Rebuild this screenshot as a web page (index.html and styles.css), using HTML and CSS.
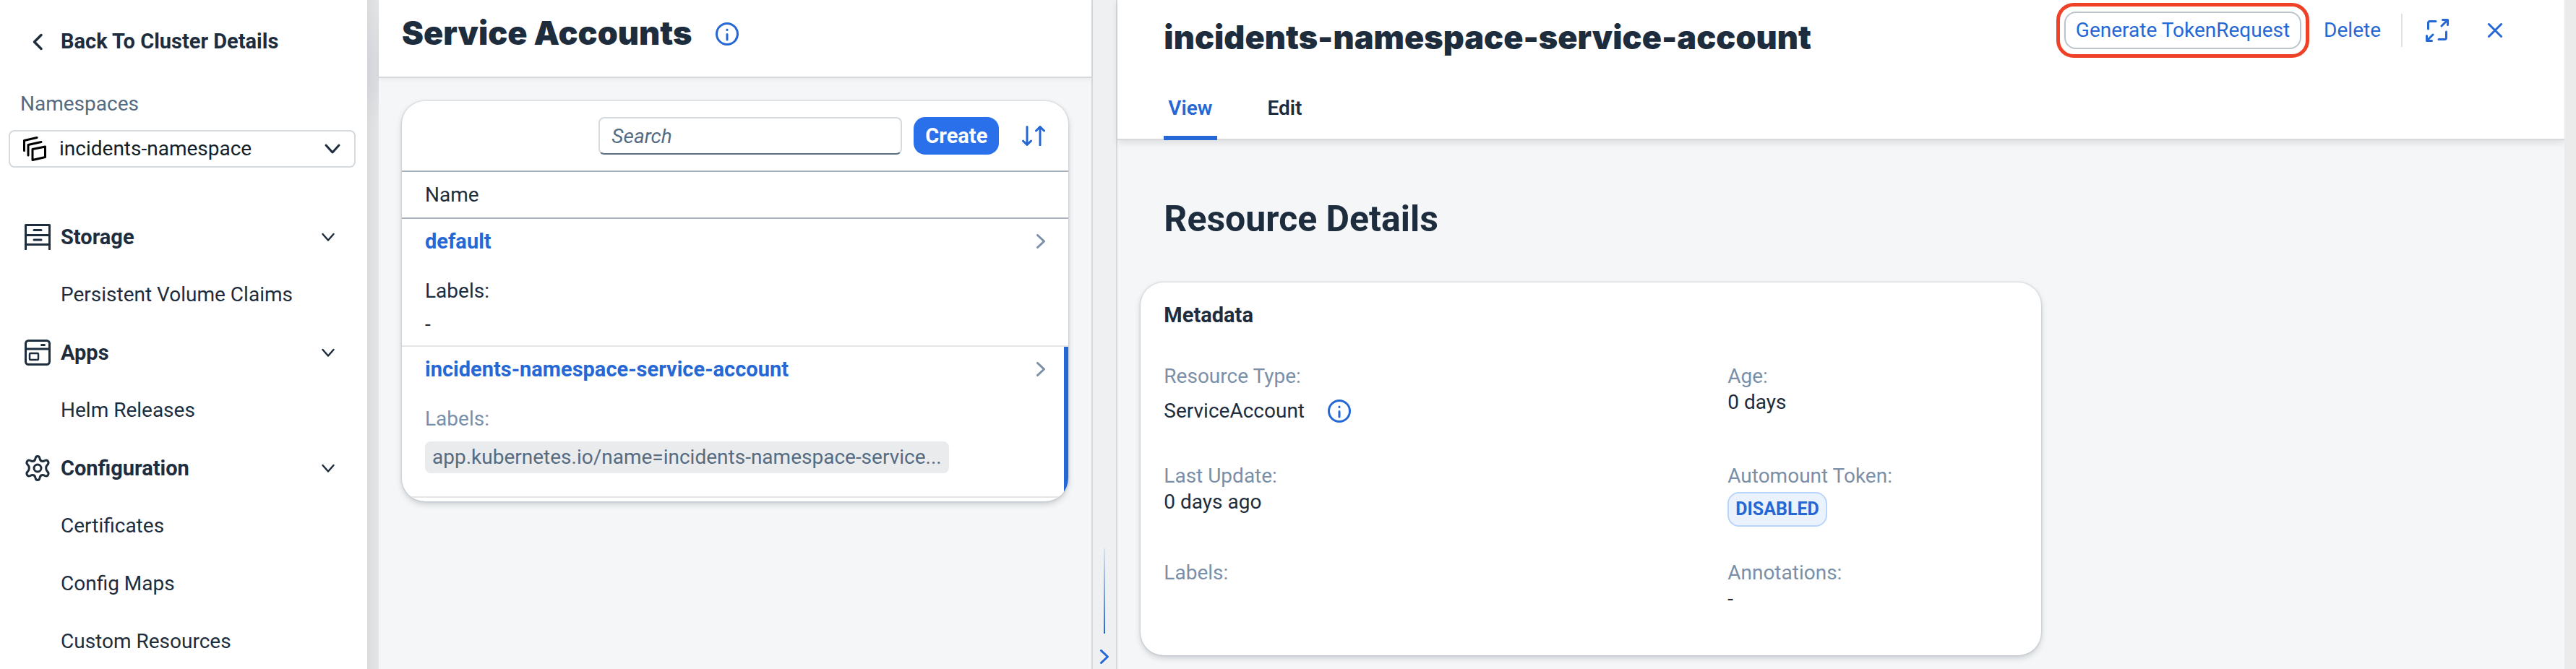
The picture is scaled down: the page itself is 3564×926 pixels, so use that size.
FILE: index.html
```html
<!DOCTYPE html>
<html lang="en">
<head>
<meta charset="utf-8">
<title>Service Accounts</title>
<link rel="stylesheet" href="styles.css">
</head>
<body>
<div class="app">
  <nav class="sidebar" aria-label="Namespace navigation">
    <a class="back" href="#">
      <svg class="icon" viewBox="0 0 36 36"><path d="M23 9.500 13.500 19l9.500 9.500" stroke-width="3.500"/></svg>
      <span>Back To Cluster Details</span>
    </a>
    <label class="ns-label" for="namespace">Namespaces</label>
    <div class="ns-select">
      <svg class="ns-icon" viewBox="0 0 32 34"><path d="M1.500 19.500V5.500L19 1.500M7 26V11.500L25 7.500M13 17.500 30.500 14v14.500L13 32.500z"/></svg>
      <select id="namespace"><option>incidents-namespace</option></select>
      <svg class="ns-chevron" viewBox="0 0 24 24"><path d="m3 7 9 10 9-10"/></svg>
    </div>
    <ul class="menu">
      <li><button class="group" type="button">
        <svg class="icon" viewBox="0 0 36 36"><path d="M1.500 35V1.500h33V35M1.500 15.500h33M1.500 28.500h33M13 8.500h10M13 22h10"/></svg>
        <span class="group-name">Storage</span>
        <svg class="chevron" viewBox="0 0 20 20"><path d="m2.500 6 7.500 8.500L17.500 6"/></svg></button></li>
      <li><a class="item" href="#">Persistent Volume Claims</a></li>
      <li><button class="group" type="button">
        <svg class="icon" viewBox="0 0 36 36"><rect x="1.500" y="1.500" width="33" height="33" rx="4"/><path d="M1.500 13h33M23.500 7.500h4"/><rect x="7" y="19" width="12" height="9" rx="1" stroke-width="2.500"/></svg>
        <span class="group-name">Apps</span>
        <svg class="chevron" viewBox="0 0 20 20"><path d="m2.500 6 7.500 8.500L17.500 6"/></svg></button></li>
      <li><a class="item" href="#">Helm Releases</a></li>
      <li><button class="group" type="button">
        <svg class="icon" viewBox="0 0 36 36"><path d="M15 4.500Q15.500 1.500 18 1.500t3 3q.500 4 4 4 1.500 0 3-1 3-1.500 4.500 1 1.500 3-1 5-1.800 1.500-1.800 4.500t1.800 4.500q2.500 2 1 5-1.500 2.500-4.500 1-1.500-1-3-1-3.500 0-4 4-.500 3-3 3t-3-3q-.500-4-4-4-1.500 0-3 1-3 1.500-4.500-1-1.500-3 1-5 1.800-1.500 1.800-4.500t-1.800-4.500q-2.500-2-1-5 1.500-2.500 4.500-1 1.500 1 3 1 3.500 0 4-4z"/><circle cx="18" cy="18" r="5"/></svg>
        <span class="group-name">Configuration</span>
        <svg class="chevron" viewBox="0 0 20 20"><path d="m2.500 6 7.500 8.500L17.500 6"/></svg></button></li>
      <li><a class="item" href="#">Certificates</a></li>
      <li><a class="item" href="#">Config Maps</a></li>
      <li><a class="item" href="#">Custom Resources</a></li>
    </ul>
  </nav>

  <main class="list-column">
    <header class="list-header">
      <h1 class="title">Service Accounts</h1>
      <button class="icon-button" type="button" aria-label="About service accounts">
        <svg class="info" viewBox="0 0 32 32"><circle cx="16" cy="16" r="14.500"/><path d="M16 16.500v7.500M16 10v.500"/></svg>
      </button>
    </header>
    <section class="card list-card">
      <div class="toolbar">
        <input class="search" type="search" placeholder="Search" aria-label="Search">
        <button class="create" type="button">Create</button>
        <button class="icon-button sort" type="button" aria-label="Sort">
          <svg class="sort-icon" viewBox="0 0 32 28"><path d="M7 1.500V26M1.500 21 7 26.500l5.500-5.500M25 27V2M19.500 7 25 1.500 30.500 7"/></svg>
        </button>
      </div>
      <table class="table">
        <thead><tr><th scope="col">Name</th></tr></thead>
        <tbody>
          <tr><td>
            <div class="row">
              <div class="row-top"><a class="name" href="#">default</a><svg class="row-chevron" viewBox="0 0 12 20"><path d="m1.500 1.500 9 8.500-9 8.500"/></svg></div>
              <div class="row-label">Labels:</div>
              <div class="row-value">-</div>
            </div>
          </td></tr>
          <tr class="selected"><td>
            <div class="row">
              <div class="row-top"><a class="name" href="#">incidents-namespace-service-account</a><svg class="row-chevron" viewBox="0 0 12 20"><path d="m1.500 1.500 9 8.500-9 8.500"/></svg></div>
              <div class="row-label muted">Labels:</div>
              <div class="token">app.kubernetes.io/name=incidents-namespace-service...</div>
            </div>
          </td></tr>
        </tbody>
      </table>
    </section>
  </main>

  <div class="separator">
    <div class="grip"></div>
    <button class="icon-button" type="button" aria-label="Expand list column">
      <svg class="row-chevron blue" viewBox="0 0 12 20"><path d="m1.500 1.500 9 8.500-9 8.500"/></svg>
    </button>
  </div>

  <section class="detail">
    <header class="detail-header">
      <div class="detail-top">
        <h2 class="title">incidents-namespace-service-account</h2>
        <div class="actions">
          <span class="highlight"><button class="generate" type="button">Generate TokenRequest</button></span>
          <button class="delete" type="button">Delete</button>
          <span class="divider"></span>
          <button class="icon-button" type="button" aria-label="Full screen">
            <svg class="expand" viewBox="0 0 32 32"><path d="M3.500 14V6q0-2.500 2.500-2.500h8M28.500 18v8q0 2.500-2.500 2.500h-8M22 10l8-8M23.500 1.500h7v7M10 22l-8 8M1.500 23.500v7h7"/></svg>
          </button>
          <button class="icon-button" type="button" aria-label="Close">
            <svg class="close" viewBox="0 0 20 20"><path d="m1.500 1.500 17 17M18.500 1.500l-17 17"/></svg>
          </button>
        </div>
      </div>
      <div class="tabs" role="tablist">
        <button class="tab active" type="button" role="tab" aria-selected="true">View</button>
        <button class="tab" type="button" role="tab" aria-selected="false">Edit</button>
      </div>
    </header>
    <div class="detail-body">
      <h3 class="section-title">Resource Details</h3>
      <div class="cards">
        <section class="card meta">
          <h4 class="meta-title">Metadata</h4>
          <dl class="fields">
            <div class="field"><dt>Resource Type:</dt>
              <dd class="with-info"><span>ServiceAccount</span><button class="icon-button" type="button" aria-label="About resource type"><svg class="info" viewBox="0 0 32 32"><circle cx="16" cy="16" r="14.500"/><path d="M16 16.500v7.500M16 10v.500"/></svg></button></dd></div>
            <div class="field"><dt>Age:</dt><dd>0 days</dd></div>
            <div class="field"><dt>Last Update:</dt><dd>0 days ago</dd></div>
            <div class="field"><dt>Automount Token:</dt><dd><span class="badge">DISABLED</span></dd></div>
            <div class="field"><dt>Labels:</dt><dd></dd></div>
            <div class="field"><dt>Annotations:</dt><dd>-</dd></div>
          </dl>
        </section>
      </div>
    </div>
  </section>
  <div class="gutter"></div>
</div>
</body>
</html>
```

FILE: styles.css
```css
:root {
  --text: #1d2d3e;
  --muted: #7a8fa8;
  --slate: #556b82;
  --blue: #2567d4;
  --line: #d9d9d9;
  --page: #f5f6f7;
}
* { box-sizing: border-box; }
body {
  margin: 0;
  background: var(--page);
  color: var(--text);
  font-family: Roboto, "Liberation Sans", sans-serif;
  font-size: 28px;
  line-height: 34px;
}
h1, h2, h3, h4, ul, dl, dd { margin: 0; padding: 0; }
ul { list-style: none; }
a { color: inherit; text-decoration: none; }
button, input, select { font: inherit; color: inherit; margin: 0; }
button { background: none; border: 0; padding: 0; cursor: pointer; }
svg {
  display: block;
  flex: none;
  fill: none;
  stroke: currentColor;
  stroke-width: 3;
  stroke-linecap: round;
  stroke-linejoin: round;
}
.app {
  display: flex;
  height: 100vh;
  overflow: hidden;
  background:
    linear-gradient(rgba(190, 194, 202, 0) 10px, rgba(190, 194, 202, .25) 80px, rgba(190, 194, 202, .25) 120px, rgba(190, 194, 202, 0) 170px),
    linear-gradient(90deg, #dadbdd 508px, #e5e6e8 524px);
}

/* Sidebar */
.sidebar { flex: none; width: 508px; background: #fff; }
.icon { width: 36px; height: 36px; }
.back, .group, .name, .create, .meta-title { font-size: 29px; font-weight: 700; }
.back { display: flex; align-items: center; gap: 14px; padding: 39px 34px 0; line-height: 36px; }
.ns-label { display: block; padding: 52px 28px 19px; color: var(--slate); }
.ns-select { position: relative; margin: 0 16px 0 12px; }
.ns-select select {
  appearance: none;
  display: block;
  width: 100%;
  height: 52px;
  padding: 0 60px 0 68px;
  border: 2px solid #d5dadf;
  border-radius: 8px;
  background: #fff;
  color: #131e29;
}
.ns-icon { position: absolute; left: 20px; top: 9px; width: 32px; height: 34px; color: #000; }
.ns-chevron { position: absolute; right: 20px; top: 14px; width: 24px; height: 24px; }
.menu { padding-top: 56px; }
.group { display: flex; align-items: center; width: 100%; height: 80px; padding: 0 44px 0 34px; gap: 14px; text-align: left; }
.group-name { flex: 1; }
.chevron { width: 20px; height: 20px; stroke-width: 2.5; }
.item { display: flex; align-items: center; height: 80px; padding-left: 84px; }

/* List column */
.list-column { flex: 987 1 0; min-width: 0; margin-left: 16px; background: var(--page); border-right: 2px solid var(--line); }
.title { font-family: Inter, Roboto, sans-serif; font-size: 45px; line-height: 56px; font-weight: 900; }
.list-header { display: flex; align-items: flex-start; gap: 32px; height: 108px; padding: 18px 32px 0; background: #fff; border-bottom: 2px solid var(--line); box-shadow: 0 2px 6px rgba(34, 53, 72, .06); }
.icon-button { display: flex; align-items: center; justify-content: center; color: var(--blue); }
.list-header .icon-button { height: 58px; }
.info { width: 32px; height: 32px; }
.card { background: #fff; border-radius: 32px; box-shadow: 0 0 3px rgba(34, 53, 72, .25), 0 4px 8px rgba(34, 53, 72, .2); }
.list-card { margin: 32px; padding-bottom: 5px; overflow: hidden; }
.toolbar { display: flex; justify-content: flex-end; align-items: center; gap: 16px; height: 96px; padding: 0 32px; }
.search { width: 420px; height: 52px; padding: 0 16px; border: 2px solid #d5dadf; border-bottom-color: #5b6e84; border-radius: 8px; outline: 0; appearance: none; background: #fff; }
.search::placeholder { color: var(--slate); font-style: italic; opacity: 1; }
.create { height: 52px; padding: 0 16px; border-radius: 16px; background: #2a70ea; color: #fff; }
.sort { padding-left: 16px; }
.sort-icon { width: 32px; height: 28px; }
.table { width: 100%; border-collapse: separate; border-spacing: 0; }
th { height: 67px; padding: 0 32px; border-top: 2px solid #a8b2bd; border-bottom: 2px solid #a8b2bd; text-align: left; font-weight: 400; }
td { padding: 0; border-bottom: 2px solid #e5e5e5; }
.row { padding: 14px 32px 12px; }
.row-top { display: flex; justify-content: space-between; align-items: center; margin-bottom: 35px; }
.name { color: var(--blue); }
.row-chevron { width: 12px; height: 20px; color: var(--muted); }
.row-chevron.blue { color: var(--blue); }
.row-value { padding-top: 12px; }
.selected .row { padding-bottom: 32px; box-shadow: inset -6px 0 var(--blue); }
.muted { color: var(--muted); }
.token { width: fit-content; margin-top: 14px; padding: 5px 10px; border-radius: 8px; background: #eaebed; color: var(--slate); }

/* Column separator */
.separator { flex: none; display: flex; flex-direction: column; align-items: center; justify-content: flex-end; gap: 22px; width: 34px; padding-bottom: 7px; background: #eff0f2; border-right: 2px solid var(--line); }
.grip { width: 2px; height: 118px; background: linear-gradient(rgba(37, 103, 212, .1), var(--blue)); }

/* Detail column */
.detail { flex: 2003 1 0; min-width: 0; background: var(--page); }
.detail-header { display: flex; flex-direction: column; justify-content: space-between; height: 194px; background: #fff; border-bottom: 2px solid var(--line); box-shadow: 0 4px 10px rgba(0, 0, 0, .1); }
.detail-top { display: flex; justify-content: space-between; align-items: flex-start; padding: 4px 86px 0 64px; }
.detail-top .title { padding-top: 20px; }
.actions { display: flex; align-items: center; }
.highlight { display: flex; padding: 7px 6px; border: 5px solid #ee4128; border-radius: 24px; }
.generate { height: 52px; padding: 0 14px; border: 2px solid #bcc3ca; border-radius: 16px; color: var(--blue); }
.delete { margin: 0 28px 0 20px; color: var(--blue); }
.divider { width: 2px; height: 46px; margin-right: 32px; background: #e0e2e4; }
.expand { width: 32px; height: 32px; margin-right: 54px; }
.close { width: 20px; height: 20px; }
.tabs { display: flex; gap: 64px; padding-left: 64px; margin-bottom: -2px; }
.tab { height: 64px; padding: 0 6px 18px; font-weight: 600; border-bottom: 6px solid transparent; }
.tab.active { color: var(--blue); border-color: var(--blue); border-radius: 4px 4px 0 0; }
.detail-body { padding: 80px 32px 32px; }
.section-title { padding-left: 32px; font-size: 50px; line-height: 58px; font-weight: 700; }
.cards { display: grid; grid-template-columns: 9fr 5fr; padding-top: 59px; }
.meta { padding: 28px 32px 60px; }
.meta-title { margin-bottom: 50px; }
.fields { display: grid; grid-template-columns: 66% 1fr; grid-template-rows: 138px 134px auto; line-height: 36px; }
dt { color: var(--muted); }
.with-info { display: flex; align-items: center; gap: 32px; height: 60px; }
.badge { display: block; width: fit-content; height: 48px; margin-top: 4px; padding: 0 9px; border: 2px solid #b8d5fb; border-radius: 16px; background: #eaf2fe; color: var(--blue); font-size: 25px; font-weight: 700; line-height: 44px; }

.gutter { flex: none; width: 16px; background: #ebebeb; }
```
